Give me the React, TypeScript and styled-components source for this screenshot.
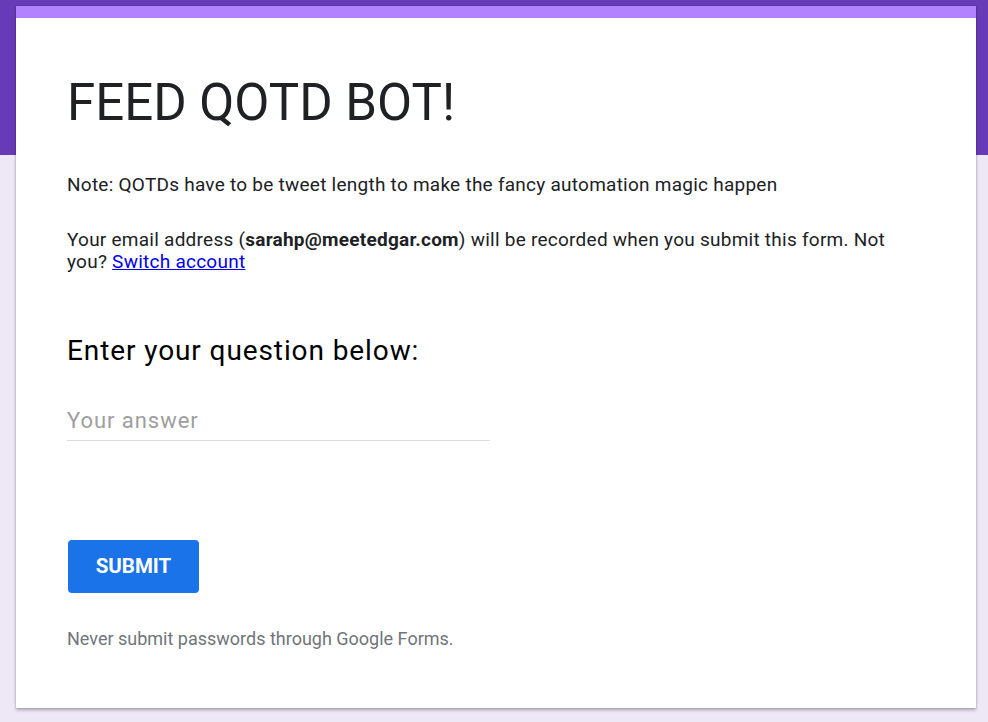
import React from 'react';
import styled, { createGlobalStyle } from 'styled-components';

const GlobalStyle = createGlobalStyle`
  html, body {
    margin: 0;
    padding: 0;
  }
  body {
    background: #ede7f6;
    font-family: Roboto, "Liberation Sans", Arial, sans-serif;
    color: #202124;
  }
`;

const Page = styled.div`
  min-height: 722px;
  padding: 6px 0 14px 16px;
  box-sizing: border-box;
  background: linear-gradient(#673ab7 0, #673ab7 155px, #ede7f6 155px);
`;

const Card = styled.div`
  width: 960px;
  box-sizing: border-box;
  background: #fff;
  border-top: 12px solid #b283fe;
  padding: 55px 51px 58px;
  box-shadow: 0 2px 3px rgba(0, 0, 0, 0.28), 0 0 2px rgba(0, 0, 0, 0.12);
`;

const Title = styled.h1`
  margin: 0;
  font-size: 51px;
  line-height: 60px;
  font-weight: 400;
  color: #202124;
`;

const Paragraph = styled.p<{ $gap: number }>`
  margin: ${p => p.$gap}px 0 0;
  font-size: 19px;
  line-height: 22.4px;
  letter-spacing: 0.25px;
  color: #202124;

  b {
    font-weight: 700;
  }

  a {
    color: #0000ee;
    text-decoration: underline;
  }
`;

const Question = styled.div`
  margin-top: 61px;
  font-size: 28px;
  line-height: 32px;
  letter-spacing: 0.9px;
  color: #000;
`;

const AnswerInput = styled.input`
  display: block;
  margin-top: 42px;
  width: 423px;
  height: 32px;
  box-sizing: border-box;
  padding: 0 0 8px;
  border: none;
  border-bottom: 1px solid #dadce0;
  font-family: Roboto, "Liberation Sans", Arial, sans-serif;
  font-size: 22px;
  line-height: 24px;
  letter-spacing: 0.95px;
  color: #202124;
  outline: none;
  background: transparent;

  &::placeholder {
    color: #9e9e9e;
  }
`;

const SubmitButton = styled.button`
  display: block;
  margin: 99px 0 0 1px;
  width: 131px;
  height: 53px;
  border: none;
  border-radius: 4px;
  background: #1a73e8;
  color: #fff;
  font-family: Roboto, "Liberation Sans", Arial, sans-serif;
  font-size: 20.5px;
  font-weight: 700;
  cursor: pointer;
`;

const Footnote = styled.div`
  margin-top: 35px;
  font-size: 18px;
  line-height: 22px;
  color: #70757a;
`;

export default function App() {
  return (
    <>
      <GlobalStyle />
      <Page>
        <Card>
          <Title>FEED QOTD BOT!</Title>
          <Paragraph $gap={40.5}>
            Note: QOTDs have to be tweet length to make the fancy automation magic happen
          </Paragraph>
          <Paragraph $gap={33}>
            Your email address (<b>sarahp@meetedgar.com</b>) will be recorded when you submit this form. Not
            you? <a href="#">Switch account</a>
          </Paragraph>
          <Question>Enter your question below:</Question>
          <AnswerInput placeholder="Your answer" />
          <SubmitButton>SUBMIT</SubmitButton>
          <Footnote>Never submit passwords through Google Forms.</Footnote>
        </Card>
      </Page>
    </>
  );
}
